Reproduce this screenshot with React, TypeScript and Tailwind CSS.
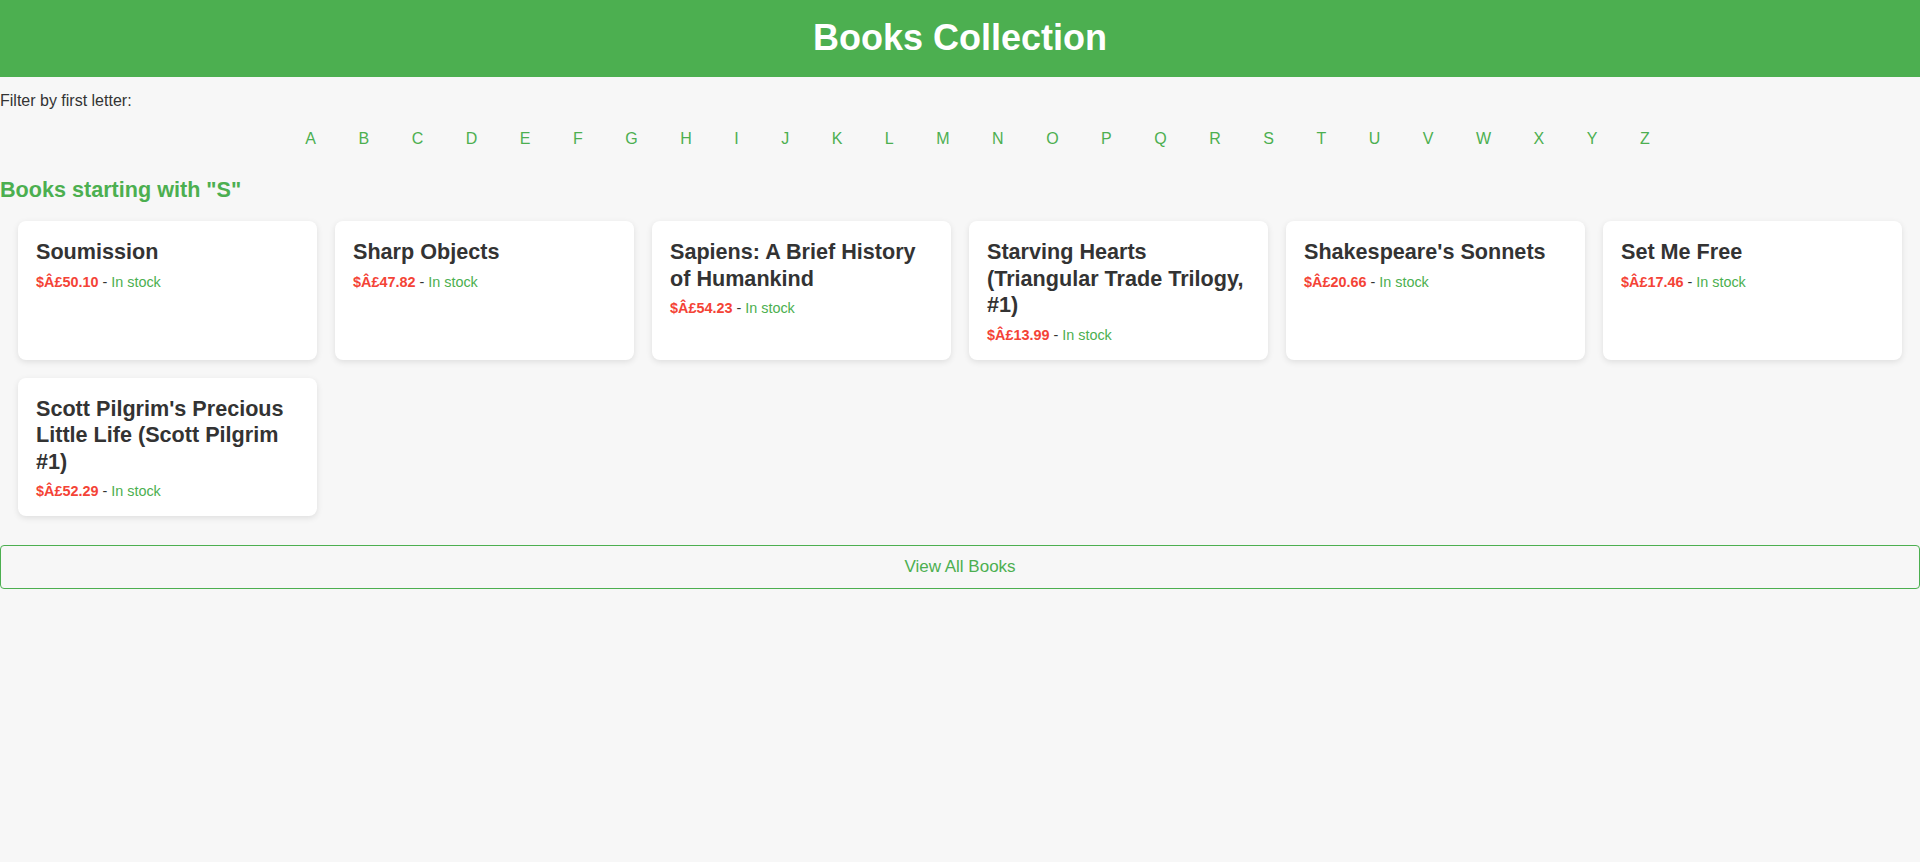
const LETTERS = 'ABCDEFGHIJKLMNOPQRSTUVWXYZ'.split('');

interface Book {
  title: string;
  price: string;
  stock: string;
}

const BOOKS: Book[] = [
  { title: 'Soumission', price: '$Â£50.10', stock: 'In stock' },
  { title: 'Sharp Objects', price: '$Â£47.82', stock: 'In stock' },
  { title: 'Sapiens: A Brief History of Humankind', price: '$Â£54.23', stock: 'In stock' },
  { title: 'Starving Hearts (Triangular Trade Trilogy, #1)', price: '$Â£13.99', stock: 'In stock' },
  { title: "Shakespeare's Sonnets", price: '$Â£20.66', stock: 'In stock' },
  { title: 'Set Me Free', price: '$Â£17.46', stock: 'In stock' },
  { title: "Scott Pilgrim's Precious Little Life (Scott Pilgrim #1)", price: '$Â£52.29', stock: 'In stock' },
];

function BookCard({ book }: { book: Book }) {
  return (
    <div className="bg-white rounded-lg pt-[18px] px-[18px] pb-[16px] shadow-[0_2px_6px_rgba(0,0,0,0.1)]">
      <h3 className="text-[21.6px] leading-[26.5px] font-bold text-[#333] mb-[8px]">{book.title}</h3>
      <p className="text-[14.4px] leading-[17px] text-[#333]">
        <span className="font-bold text-[#f44336]">{book.price}</span> -{' '}
        <span className="text-[#4caf50]">{book.stock}</span>
      </p>
    </div>
  );
}

export default function App() {
  return (
    <div className="min-h-[862px] bg-[#f7f7f7] text-[#333] font-['Liberation_Sans',Arial,sans-serif]">
      {/* Header */}
      <header className="h-[77px] bg-[#4caf50] flex items-center justify-center pb-[2px]">
        <h1 className="text-[36px] leading-[40px] font-bold text-white">Books Collection</h1>
      </header>

      {/* Letter filter */}
      <p className="mt-[15px] text-[16px] leading-[18px]">Filter by first letter:</p>
      <ul className="mt-[20px] pl-[35px] flex justify-center gap-[42.5px] text-[16px] leading-[18px]">
        {LETTERS.map((letter) => (
          <li key={letter}>
            <a href="#" className="text-[#4caf50]">
              {letter}
            </a>
          </li>
        ))}
      </ul>

      <h2 className="mt-[29px] text-[21.6px] leading-[25px] font-bold text-[#4caf50]">
        Books starting with "S"
      </h2>

      {/* Books grid */}
      <div className="mt-[19px] px-[18px] grid grid-cols-6 gap-[18px]">
        {BOOKS.map((book) => (
          <BookCard key={book.title} book={book} />
        ))}
      </div>

      <button className="mt-[29px] w-full border border-[#4caf50] rounded-[4px] py-[11px] text-[17px] leading-[20px] text-[#4caf50]">
        View All Books
      </button>
    </div>
  );
}
